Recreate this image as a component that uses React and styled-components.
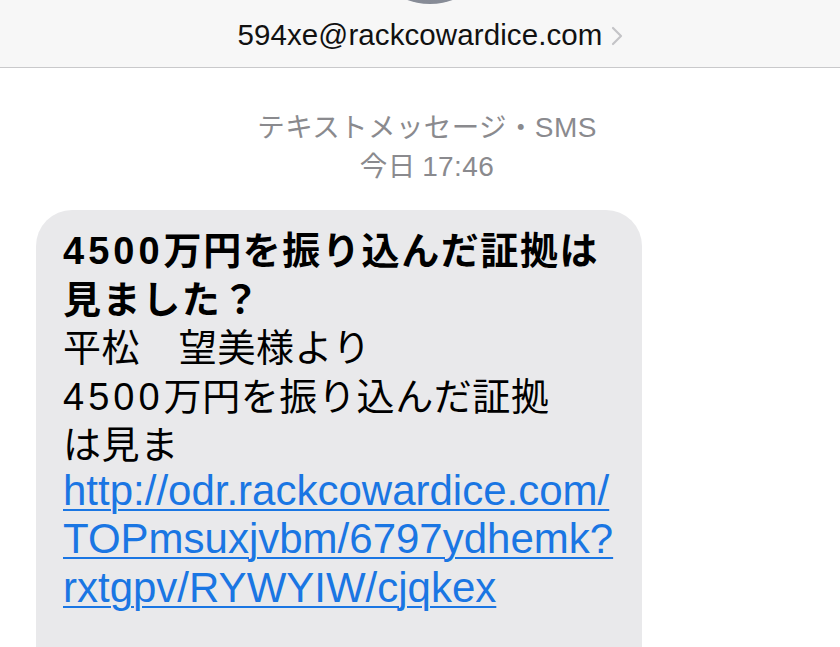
import React from "react";
import styled, { createGlobalStyle } from "styled-components";

const Global = createGlobalStyle`
  html, body { margin: 0; padding: 0; background: #ffffff; }
  body { font-family: "Liberation Sans", "Noto Sans CJK JP", sans-serif; overflow: hidden; }
`;

const Page = styled.div`
  width: 840px;
  height: 647px;
  overflow: hidden;
  display: flex;
  flex-direction: column;
  background: #ffffff;
`;

const Header = styled.header`
  flex: none;
  height: 68px;
  box-sizing: border-box;
  background: #f7f7f7;
  border-bottom: 1px solid #c9c9cb;
  display: flex;
  flex-direction: column;
  align-items: center;
  overflow: hidden;
`;

const Avatar = styled.div`
  width: 132px;
  height: 132px;
  margin: -128px 0 0 20px;
  border-radius: 50%;
  background: linear-gradient(#a5a9b3, #868b96);
  flex: none;
`;

const Contact = styled.div`
  margin-top: 14px;
  display: flex;
  align-items: center;
  gap: 8px;
  margin-left: 20px;
`;

const Email = styled.span`
  font-family: "Liberation Sans", sans-serif;
  font-size: 29.5px;
  color: #111111;
  letter-spacing: 0.1px;
`;

const Chevron = styled.svg`
  width: 12px;
  height: 20px;
  margin-top: 2px;
`;

const Meta = styled.div`
  flex: none;
  margin: 39px 0 0 14px;
  display: flex;
  flex-direction: column;
  align-items: center;
  font-family: "Noto Sans CJK JP", sans-serif;
  font-size: 27.5px;
  letter-spacing: 0.4px;
  line-height: 36px;
  color: #8a8a8e;
`;

const MetaLatin = styled.span`
  font-family: "Liberation Sans", "Noto Sans CJK JP", sans-serif;
  font-size: 28px;
`;

const Bubble = styled.div`
  margin: 25px 0 0 36px;
  width: 606px;
  box-sizing: border-box;
  background: #e9e9eb;
  border-radius: 36px;
  padding: 14px 20px 80px 27px;
  color: #000000;
  flex: none;
`;

const Line = styled.div`
  font-family: "Noto Sans CJK JP", sans-serif;
  font-size: 38px;
  line-height: 48.5px;
  font-weight: ${(p) => (p.$bold ? 700 : 400)};
  letter-spacing: ${(p) => (p.$bold ? "1.6px" : "0.6px")};
  white-space: nowrap;
`;

const Digits = styled.span`
  font-family: "Liberation Sans", sans-serif;
  line-height: 1;
  letter-spacing: 4px;
`;

const Link = styled.a`
  display: block;
  font-family: "Liberation Sans", sans-serif;
  font-size: 42px;
  line-height: 48.5px;
  color: #1a76e3;
  text-decoration: underline;
  text-decoration-thickness: 2px;
  text-underline-offset: 4px;
  white-space: nowrap;
`;

export default function App() {
  return (
    <Page>
      <Global />
      <Header>
        <Avatar />
        <Contact>
          <Email>594xe@rackcowardice.com</Email>
          <Chevron viewBox="0 0 12 20">
            <path d="M2 2 L10 10 L2 18" fill="none" stroke="#c4c4c7" strokeWidth="2.2" strokeLinecap="round" strokeLinejoin="round" />
          </Chevron>
        </Contact>
      </Header>
      <Meta>
        <div>
          テキストメッセージ・<MetaLatin>SMS</MetaLatin>
        </div>
        <div>
          今日 <MetaLatin>17:46</MetaLatin>
        </div>
      </Meta>
      <Bubble>
        <Line $bold>
          <Digits>4500</Digits>万円を振り込んだ証拠は
        </Line>
        <Line $bold>見ました？</Line>
        <Line>平松　望美様より</Line>
        <Line>
          <Digits>4500</Digits>万円を振り込んだ証拠
        </Line>
        <Line>は見ま</Line>
        <Link href="#">
          http://odr.rackcowardice.com/
          <br />
          TOPmsuxjvbm/6797ydhemk?
          <br />
          rxtgpv/RYWYIW/cjqkex
        </Link>
      </Bubble>
    </Page>
  );
}
